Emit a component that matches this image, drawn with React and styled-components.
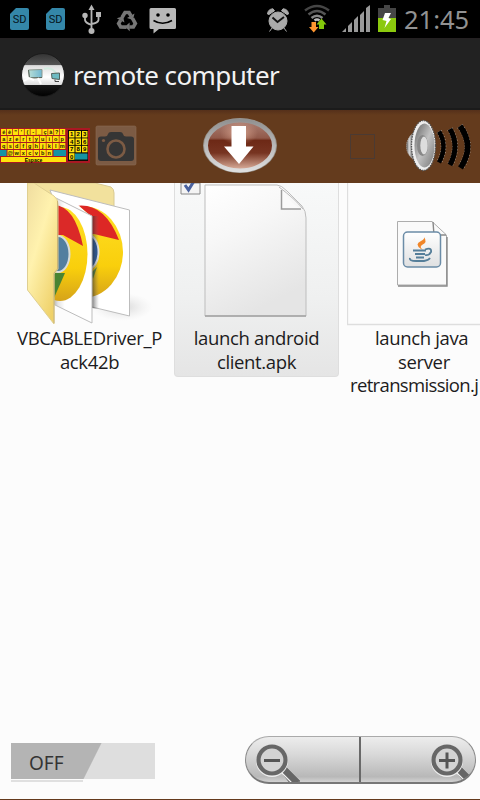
import React from "react";
import styled, { createGlobalStyle } from "styled-components";

const GlobalStyle = createGlobalStyle`
  * { box-sizing: border-box; }
  html, body { margin: 0; background: #fcfcfc; }
  svg { display: block; flex: none; }
`;

const Screen = styled.main`
  width: 480px;
  height: 800px;
  display: flex;
  flex-direction: column;
  overflow: hidden;
  background: #fcfcfc;
  border-bottom: 1px solid #643a1c;
  font-family: "Noto Sans", sans-serif;
`;

const StatusBar = styled.header`
  height: 39px;
  flex: none;
  display: flex;
  align-items: center;
  background: #000;
  border-bottom: 1px solid #242022;
`;

const Clock = styled.time`
  margin-left: -8px;
  color: #929292;
  font-size: 25.5px;
  line-height: 38px;
  white-space: nowrap;
`;

const TitleBar = styled.div`
  height: 71px;
  flex: none;
  display: flex;
  align-items: center;
  gap: 7px;
  padding: 3px 0 0 20px;
  background: #222;
  border-bottom: 2px solid #1b1b1b;
`;

const Title = styled.h1`
  margin: 0;
  color: #f3f3f3;
  font-size: 26px;
  font-weight: 400;
  line-height: 36px;
  letter-spacing: -0.6px;
  white-space: nowrap;
`;

const Toolbar = styled.nav`
  height: 73px;
  flex: none;
  display: flex;
  align-items: center;
  background: linear-gradient(#55301a, #643b1d 5px, #643b1d);
`;

const ToolButton = styled.button`
  width: ${(p) => p.$width}px;
  height: 73px;
  margin-left: ${(p) => p.$gap || 0}px;
  padding: 0;
  border: 0;
  background: none;
`;

const EmptyBox = styled.span`
  width: 25px;
  height: 25px;
  margin: 0 29px 0 71px;
  border: 1px solid #4b3a32;
`;

const Desktop = styled.section`
  flex: 1;
  display: flex;
  flex-direction: column;
  justify-content: space-between;
`;

const Files = styled.div`
  display: grid;
  grid-template-columns: 174px 165px 8px 133px;
  overflow: hidden;
`;

const File = styled.figure`
  grid-column: ${(p) => p.$column};
  margin: 0;
  height: ${(p) => (p.$selected ? 194 : 220)}px;
  overflow: hidden;
  border: ${(p) => (p.$selected ? "1px solid #dedede" : "0")};
  border-top: 0;
  border-radius: 0 0 4px 4px;
  background: ${(p) => (p.$selected ? "linear-gradient(#f8f9f9, #eff0f0 60%, #e5e5e5)" : "none")};
`;

const Label = styled.figcaption`
  display: flex;
  flex-direction: column;
  align-items: ${(p) => p.$align || "center"};
  padding-left: ${(p) => p.$shift || 0}px;
`;

const Line = styled.span`
  color: #1c1b20;
  font-family: "Open Sans", sans-serif;
  font-size: 18.5px;
  line-height: 23.6px;
  letter-spacing: ${(p) => p.$tracking || "-0.35px"};
  margin-left: ${(p) => p.$indent || 0}px;
  white-space: nowrap;
`;

const Controls = styled.footer`
  display: flex;
  justify-content: space-between;
  align-items: flex-start;
  padding: 0 4px 15px 11px;
`;

const Toggle = styled.button`
  width: 144px;
  height: 36px;
  margin-top: 7px;
  padding: 4px 0 0 18px;
  border: 0;
  text-align: left;
  color: #343434;
  font-family: "Noto Sans", sans-serif;
  font-size: 19px;
  line-height: 32px;
  background: linear-gradient(116.5deg, #b4b4b4 0 80.5px, #dedede 81.5px);
`;

const ToggleGroup = styled.div`
  display: flex;
  flex-direction: column;
`;

const ToggleShadow = styled.span`
  width: 72px;
  height: 2px;
  margin-top: 1px;
  background: #e0e0e0;
`;

const ZoomBar = styled.div`
  width: 231px;
  height: 48px;
  display: flex;
  border: 1px solid #888;
  border-top-color: #aaa;
  border-bottom: 2px solid #777;
  border-radius: 24px;
  overflow: hidden;
  background: linear-gradient(#ededed, #d8d8d8 40%, #b8b8b8 88%, #d2d2d2);
`;

const ZoomButton = styled.button`
  display: flex;
  flex: none;
  width: ${(p) => (p.$right ? 116 : 113)}px;
  height: 45px;
  padding: ${(p) => (p.$right ? "0 0 0 69px" : "0 0 0 9px")};
  border: 0;
  border-left: ${(p) => (p.$right ? "2px solid #696969" : "0")};
  background: none;
`;

function StatusIcons() {
  return (
    <svg width="412" height="38" viewBox="0 0 412 38">
      {[10, 46].map((x) => (
        <g key={x}>
          <path d={`M${x + 6} 8H${x + 17}Q${x + 19} 8 ${x + 19} 10V28Q${x + 19} 30 ${x + 17} 30H${x + 2}Q${x} 30 ${x} 28V14Z`} fill="#3487a9" />
          <text x={x + 9.5} y="23" fontSize="11" fontFamily="Roboto" textAnchor="middle" fill="#06141b">SD</text>
        </g>
      ))}
      <g fill="none" stroke="#b6b6b6" strokeWidth="1.8">
        <path d="M91.500 9V30M85 17V20Q85.500 23 91.500 25M98.500 16V20Q98 23 91.500 24" />
        <path d="M91.500 4.500L94.500 10H88.500Z" fill="#b6b6b6" stroke="none" />
        <circle cx="85" cy="15.500" r="2.700" fill="#b6b6b6" stroke="none" />
        <circle cx="91.500" cy="31" r="3" fill="#b6b6b6" stroke="none" />
        <path d="M96 12H101V17H96Z" fill="#b6b6b6" stroke="none" />
      </g>
      <g fill="none" stroke="#777" strokeWidth="3.6">
        {[0, 120, 240].map((a) => (
          <g key={a} transform={`rotate(${a} 127 21)`}>
            <path d="M122 17.500L125 12.500H129L131 16" />
            <path d="M134.500 13.500L133 20L127 18Z" fill="#777" stroke="none" />
          </g>
        ))}
      </g>
      <path d="M151 8H174.500Q176 8 176 9.500V27.500Q176 29 174.500 29H159L153.500 33.500V29H151Q149.500 29 149.500 27.500V9.500Q149.500 8 151 8Z" fill="#b8b8b8" />
      <circle cx="158" cy="15" r="1.800" />
      <circle cx="168" cy="15" r="1.800" />
      <path d="M153.500 20.500Q162.500 26 172 20.500" fill="none" stroke="#000" strokeWidth="1.600" />
      <g fill="#aaa" stroke="#aaa">
        <circle cx="278" cy="21" r="9" />
        <path d="M267.500 14Q268 9 273 8.800L274.500 10.800L269 14.500ZM288.500 14Q288 9 283 8.800L281.500 10.800L287 14.500ZM272 28L269.500 31.500M284 28L286.500 31.500" strokeWidth="1" />
        <path d="M272.500 17.500L277.500 22L284 17" fill="none" stroke="#111" strokeWidth="1.900" />
      </g>
      <g fill="none" strokeWidth="2.500">
        <path d="M305 10.500Q317 1.500 329 10.500" stroke="#454545" />
        <path d="M308.500 14.500Q317 7.500 325.500 14.500" stroke="#555" />
        <path d="M311.500 18Q317 13.500 322.500 18" stroke="#888" />
        <path d="M314.500 20.500Q317 18.500 319.500 20.500" stroke="#bbb" />
      </g>
      <path d="M311.500 22H316V27H318.500L313.700 32.500L309 27H311.500Z" fill="#ff9630" />
      <path d="M319 29H324V24.500H326.500L321.500 18.500L316.500 24.500H319Z" fill="#83c80b" />
      <path d="M342 32L346 28V32ZM348 32V26L352 22V32ZM354 32V20L358 16V32ZM360 32V15L364 11V32ZM366 32V8L370 5V32Z" fill="#999" />
      <path d="M384 5H390V8H396V18H378V8H384Z" fill="#454545" />
      <path d="M378 18H396V32H378Z" fill="#8bc90d" />
      <path d="M385 13H391L388.500 18L391 19L384.500 28L386.500 21L382.500 20Z" fill="#fff" />
    </svg>
  );
}

function AppLogo() {
  return (
    <svg width="46" height="46" viewBox="20 52 46 46">
      <defs>
        <linearGradient id="logo" x2="0" y2="1">
          <stop stopColor="#333" /><stop offset=".27" stopColor="#555" />
          <stop offset=".28" stopColor="#ddd" /><stop offset=".55" stopColor="#fff" />
          <stop offset=".73" stopColor="#ddd" /><stop offset=".74" stopColor="#171717" />
          <stop offset="1" stopColor="#000" />
        </linearGradient>
        <linearGradient id="screenGlass"><stop stopColor="#b9dfd7" /><stop offset="1" stopColor="#70b7d1" /></linearGradient>
      </defs>
      <circle cx="43" cy="75" r="21.500" fill="url(#logo)" stroke="#1b1b1b" />
      <path d="M28.500 70L42 69.500V77.500L29.500 78Z" fill="url(#screenGlass)" stroke="#8b998f" />
      <path d="M28.500 70L29.500 78L42 77.500" fill="none" stroke="#59665c" />
      <path d="M44 69Q51 66 57 74" fill="none" stroke="#d2ebdf" strokeWidth="2" />
      <path d="M51.500 73.500L59.500 73V79.500L52 78.500Z" fill="#6dbbc2" stroke="#52625c" />
      <path d="M55 79.500V81.500H59" stroke="#444" fill="none" />
      <path d="M24 81L29 78L34 80M38 78L41 84" stroke="#fff" strokeWidth="2" fill="none" />
    </svg>
  );
}

const KEY_ROWS = ["éè\"'(-_çà?!", "azertyuiop", "qsdfghjklm", "@wxcvbn"];

function Keyboard() {
  return (
    <svg width="90" height="73" viewBox="0 110 90 73">
      <path d="M0 128H90V163H0Z" fill="#a91823" />
      <path d="M68 130H88V161H68Z" fill="#100d06" />
      {KEY_ROWS.map((row, r) => [...row].map((key, i) => {
        const step = r === 0 ? 5.9 : 6.5;
        const x = (r === 3 ? 7.5 : 1) + i * step;
        const y = 129 + r * 7;
        return (
          <g key={`${r}-${i}`}>
            <rect x={x} y={y} width={step - 0.7} height="6" fill="#ffe20b" />
            <text x={x + 2.7} y={y + 5} fontSize="5.500" fontWeight="700" fontFamily="Liberation Sans" textAnchor="middle" fill="#241d00">{key}</text>
          </g>
        );
      }))}
      <path d="M0 150H6.500V156H0ZM53.500 150H66V156H53.500Z" fill="#1693a3" />
      <path d="M1 157H66V162H1Z" fill="#ffe20b" />
      <text x="33.500" y="161.500" fontSize="5" fontWeight="700" fontFamily="Liberation Sans" textAnchor="middle">Espace</text>
      {[..."1234567890"].map((key, i) => {
        const x = 69 + (i % 3) * 6.5;
        const y = 131 + Math.floor(i / 3) * 7.4;
        return (
          <g key={key}>
            <rect x={x} y={y} width="5.500" height="6.500" fill="#ffe20b" />
            <text x={x + 2.700} y={y + 5.300} fontSize="6" fontWeight="700" fontFamily="Liberation Sans" textAnchor="middle">{key}</text>
          </g>
        );
      })}
      <rect x="75" y="153.500" width="12.500" height="6" fill="#1693a3" />
    </svg>
  );
}

function Camera() {
  return (
    <svg width="42" height="73" viewBox="95 110 42 73">
      <rect x="96" y="126" width="40" height="39" rx="1.500" fill="#7c5b44" stroke="#8b6b54" strokeWidth=".6" />
      <path d="M98 139Q98 136.500 101 136.500H105Q107.500 136.500 108 134Q108.500 132 111 132H120Q122.500 132 123 134Q123.500 136.500 126 136.500H131Q134 136.500 134 139V158Q134 161 131 161H101Q98 161 98 158Z" fill="#353535" />
      <circle cx="116" cy="149" r="8.500" fill="none" stroke="#7c5b44" strokeWidth="2.600" />
      <circle cx="103.500" cy="140.500" r="1.600" fill="#7c5b44" />
    </svg>
  );
}

function Download() {
  return (
    <svg width="78" height="73" viewBox="201 110 78 73">
      <defs>
        <linearGradient id="oval" x2="0" y2="1">
          <stop stopColor="#ad8175" /><stop offset=".35" stopColor="#91594a" />
          <stop offset=".4" stopColor="#6d2916" /><stop offset=".65" stopColor="#773421" />
          <stop offset="1" stopColor="#e1b7a4" />
        </linearGradient>
        <linearGradient id="rim" x2="0" y2="1"><stop stopColor="#929292" /><stop offset="1" stopColor="#dedede" /></linearGradient>
        <radialGradient id="shine"><stop stopColor="#e9b6a1" stopOpacity=".8" /><stop offset="1" stopColor="#d9a38c" stopOpacity="0" /></radialGradient>
      </defs>
      <ellipse cx="240" cy="145.500" rx="37" ry="27.500" fill="#98938c" />
      <ellipse cx="240" cy="145.500" rx="34" ry="25" fill="url(#oval)" stroke="url(#rim)" strokeWidth="4" />
      <ellipse cx="239" cy="133" rx="19" ry="12" fill="url(#shine)" />
      <path d="M231.500 126H246V146.500H253.500L239 164L224 146.500H231.500Z" fill="#fff" />
    </svg>
  );
}

function Speaker() {
  return (
    <svg width="76" height="73" viewBox="404 110 76 73">
      <defs>
        <linearGradient id="metal"><stop stopColor="#444" /><stop offset=".35" stopColor="#ddd" /><stop offset=".65" stopColor="#999" /><stop offset="1" stopColor="#666" /></linearGradient>
        <linearGradient id="cone" x2="1" y2="1"><stop stopColor="#666" /><stop offset=".5" stopColor="#c2c2c2" /><stop offset="1" stopColor="#777" /></linearGradient>
      </defs>
      <path d="M414 132Q406 139 406.500 147Q407 155 414 160Z" fill="url(#metal)" stroke="#bbb" strokeDasharray="1 1" />
      <ellipse cx="423.500" cy="145.500" rx="12" ry="25" fill="#eee" stroke="#555" strokeWidth="1.300" strokeDasharray="1.500 1" />
      <ellipse cx="424.500" cy="145.500" rx="10" ry="22" fill="url(#cone)" />
      <ellipse cx="422.500" cy="145.500" rx="5.500" ry="10.500" fill="#888" />
      <ellipse cx="424" cy="145.500" rx="3.700" ry="9" fill="#ddd" />
      {["M439 131.500Q448 146 439 162.500", "M450 129Q460 146 450 165", "M460 126Q475 146 460.500 168"].map((d, i) => (
        <g key={d} fill="none">
          <path d={d} stroke="#c5b8ad" strokeWidth={5.5 + i * .5} strokeDasharray="1 2" />
          <path d={d} stroke="#000" strokeWidth={4.500 + i * .6} />
        </g>
      ))}
    </svg>
  );
}

function Folder() {
  return (
    <svg width="174" height="143" viewBox="0 183 174 143">
      <defs>
        <linearGradient id="manila" x2=".7" y2="1"><stop stopColor="#f0dda0" /><stop offset=".45" stopColor="#fff2ae" /><stop offset="1" stopColor="#efd169" /></linearGradient>
        <linearGradient id="yellow" x2="0" y2="1"><stop stopColor="#ffdf26" /><stop offset=".65" stopColor="#f9cf0c" /><stop offset="1" stopColor="#d6a319" /></linearGradient>
        <linearGradient id="fold"><stop stopColor="#aaa" /><stop offset=".13" stopColor="#e4e4e4" /><stop offset=".3" stopColor="#fff" /></linearGradient>
        <linearGradient id="pageShade"><stop stopColor="#222" stopOpacity=".6" /><stop offset="1" stopColor="#777" stopOpacity="0" /></linearGradient>
        <radialGradient id="floor"><stop stopColor="#bbb" stopOpacity=".6" /><stop offset="1" stopColor="#ddd" stopOpacity="0" /></radialGradient>
        <clipPath id="back"><path d="M70 198L129 211V315L92 308V217Z" /></clipPath>
        <clipPath id="front"><path d="M54 199L92 217V322L54 304Z" /></clipPath>
      </defs>
      <ellipse cx="122" cy="307" rx="31" ry="14" fill="url(#floor)" />
      <path d="M31 183H95L111 187Q114 189 114 193V220L56 197Z" fill="#f2e19d" stroke="#d8c992" />
      <path d="M50 190L129.500 210V316L92 307Z" fill="#fff" stroke="#bdbdbd" />
      <g clipPath="url(#back)">
        <ellipse cx="83" cy="252" rx="40" ry="46" fill="url(#yellow)" />
        <path d="M70 207Q103 198 119 240L94 234H70Z" fill="#dd2725" />
        <path d="M91 273L97 267L93 279Z" fill="#588333" />
        <ellipse cx="88" cy="252" rx="10.500" ry="17" fill="#24559b" stroke="#e1e3e3" strokeWidth="2" />
        <path d="M92 216H99V310H92Z" fill="url(#pageShade)" />
      </g>
      <path d="M54 197L92 216V323L53 304Z" fill="url(#fold)" stroke="#bdbdbd" />
      <g clipPath="url(#front)">
        <ellipse cx="60" cy="254" rx="27.500" ry="47" fill="url(#yellow)" />
        <path d="M54 205Q75 206 83 246L63 235L54 235Z" fill="#db2928" />
        <path d="M54 273H65L54 298Z" fill="#498432" />
        <ellipse cx="58" cy="254" rx="11.500" ry="18" fill="#527f9f" stroke="#d7dcda" strokeWidth="2" />
      </g>
      <path d="M27.500 183H34L54 196Q58 199 58 204V269L54 274V324L27.500 290Z" fill="url(#manila)" stroke="#dfcf91" />
      <path d="M57.500 201V269L54 273V323" fill="none" stroke="#c9b477" />
    </svg>
  );
}

function Document() {
  return (
    <svg width="163" height="143" viewBox="175 183 163 143">
      <defs><linearGradient id="paper" x2=".4" y2="1"><stop stopColor="#fff" /><stop offset=".4" stopColor="#f7f7f7" /><stop offset="1" stopColor="#e5e5e5" /></linearGradient></defs>
      <path d="M181 183H200V194H181Z" fill="#f4f4f4" stroke="#888" />
      <path d="M185 185L188.500 190L194 181" fill="none" stroke="#4a629f" strokeWidth="3" />
      <path d="M205 185H277Q281 185 287 191L302 206Q306 211 306 218V316H205Z" fill="url(#paper)" stroke="#bdbdbd" />
      <path d="M205 316H306" stroke="#a2a2a2" strokeWidth="1.500" />
      <path d="M279 187L281 209H304Q292 207 281 187Z" fill="#fafafa" />
      <path d="M281.500 190V209H301" fill="none" stroke="#9c9c9c" strokeWidth="1.500" />
      <path d="M279 187Q295 199 303 209" fill="none" stroke="#b9b9b9" />
    </svg>
  );
}

function JavaDocument() {
  return (
    <svg width="133" height="143" viewBox="347 183 133 143">
      <defs><linearGradient id="jar" x2="0" y2="1"><stop stopColor="#fff" /><stop offset="1" stopColor="#dfe0e1" /></linearGradient></defs>
      <path d="M347.500 183V324.500H480" fill="none" stroke="#dedede" strokeWidth="1.300" />
      <path d="M397.500 221.500H432L446.500 235V285H397.500Z" fill="#fafafa" stroke="#adadad" />
      <path d="M433 222L434 235H446M398 286H447V237" fill="none" stroke="#888" strokeWidth="1.400" />
      <rect x="403.500" y="232" width="37" height="35" rx="4" fill="url(#jar)" stroke="#6b8ca7" strokeWidth="1.500" />
      <path d="M421 249Q414 244 421 241Q425 239 424 237Q428 242 422 245Q419 247 423 250" fill="#f18629" />
      <g fill="none" stroke="#557e99" strokeWidth="1.800">
        <path d="M413 250.500H426M415 254H425M416 257.500H424M425 249.500Q432 247 431 252Q429 256 425 255M410 258Q409 261 416 261H424Q429 260 430 258" />
      </g>
    </svg>
  );
}

function Magnifier({ plus }) {
  return (
    <svg width="45" height="45" viewBox="0 0 45 45">
      <path d="M25 33L30 29L45 44L37 49Z" fill="#666" stroke="#777" />
      <path d="M24 33L37 46" stroke="#f3f3f3" strokeWidth="1.200" />
      <circle cx="17" cy="24" r="13.500" fill="#d8d8d8" stroke="#eee" strokeWidth="5" />
      <circle cx="17" cy="23" r="13.500" fill="#d3d3d3" stroke="#676767" strokeWidth="4.200" />
      <path d={plus ? "M9 23.500H25M17 15.500V31.500" : "M9 23.500H25"} stroke="#555" strokeWidth="3" />
    </svg>
  );
}

export default function App() {
  return (
    <Screen>
      <GlobalStyle />
      <StatusBar>
        <StatusIcons />
        <Clock>21:45</Clock>
      </StatusBar>
      <TitleBar>
        <AppLogo />
        <Title>remote computer</Title>
      </TitleBar>
      <Toolbar>
        <ToolButton $width={90} aria-label="Keyboard"><Keyboard /></ToolButton>
        <ToolButton $width={42} $gap={5} aria-label="Camera"><Camera /></ToolButton>
        <ToolButton $width={78} $gap={64} aria-label="Download"><Download /></ToolButton>
        <EmptyBox />
        <ToolButton $width={76} aria-label="Sound"><Speaker /></ToolButton>
      </Toolbar>
      <Desktop>
        <Files>
          <File $column={1}>
            <Folder />
            <Label $shift={5}>
              <Line>VBCABLEDriver_P</Line>
              <Line>ack42b</Line>
            </Label>
          </File>
          <File $column={2} $selected>
            <Document />
            <Label>
              <Line>launch android</Line>
              <Line>client.apk</Line>
            </Label>
          </File>
          <File $column={4}>
            <JavaDocument />
            <Label $align="flex-start">
              <Line $indent={28}>launch java</Line>
              <Line $indent={51}>server</Line>
              <Line $indent={3} $tracking="-0.65px">retransmission.j</Line>
            </Label>
          </File>
        </Files>
        <Controls>
          <ToggleGroup>
            <Toggle>OFF</Toggle>
            <ToggleShadow />
          </ToggleGroup>
          <ZoomBar>
            <ZoomButton aria-label="Zoom out"><Magnifier /></ZoomButton>
            <ZoomButton $right aria-label="Zoom in"><Magnifier plus /></ZoomButton>
          </ZoomBar>
        </Controls>
      </Desktop>
    </Screen>
  );
}
